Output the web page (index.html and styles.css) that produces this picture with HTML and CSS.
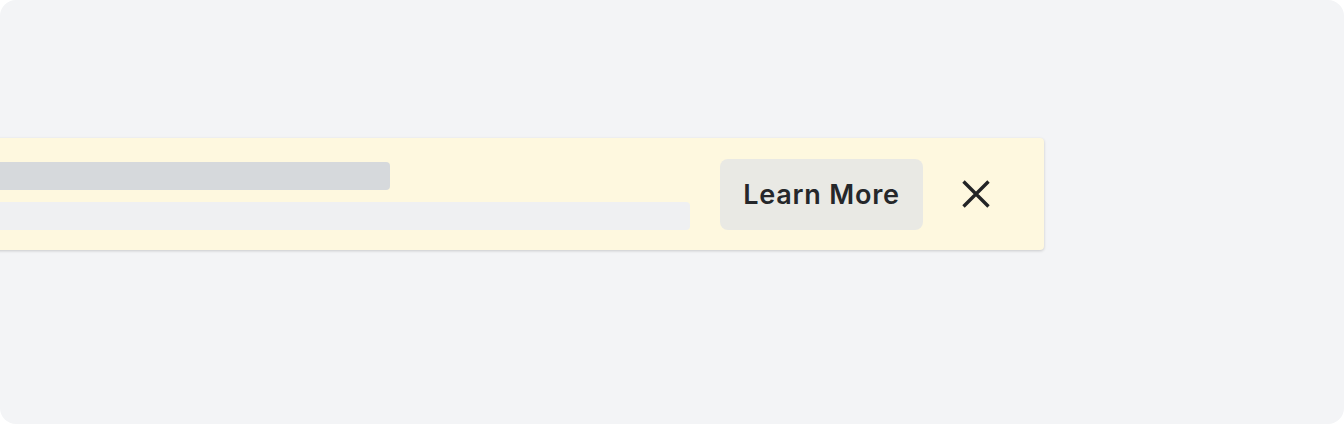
FILE: index.html
```html
<!DOCTYPE html>
<html lang="en">
<head>
<meta charset="utf-8">
<title>Banner</title>
<link rel="stylesheet" href="styles.css">
</head>
<body>
<div class="frame">
  <div class="banner">
    <div class="lines">
      <div class="line line-title"></div>
      <div class="line line-body"></div>
    </div>
    <button class="learn">Learn More</button>
    <button class="close" aria-label="Close">
      <svg width="28" height="28" viewBox="0 0 28 28" fill="none" stroke="#222426" stroke-width="3.4" stroke-linecap="butt">
        <path d="M1.5 1.5 L26.5 26.5 M26.5 1.5 L1.5 26.5"/>
      </svg>
    </button>
  </div>
</div>
</body>
</html>
```

FILE: styles.css
```css
html, body {
  margin: 0;
  padding: 0;
  background: #ffffff;
}
.frame {
  width: 1344px;
  height: 424px;
  box-sizing: border-box;
  background: #f3f4f6;
  border-radius: 16px;
  overflow: hidden;
  padding-top: 138px;
  font-family: Inter, "Liberation Sans", sans-serif;
}
.banner {
  margin-left: -60px;
  width: 1104px;
  height: 112px;
  box-sizing: border-box;
  background: #fef8df;
  border-radius: 4px;
  box-shadow: 0 1px 3px rgba(0, 0, 0, 0.18);
  display: flex;
  align-items: center;
  padding: 0 54px 0 40px;
}
.lines {
  width: 710px;
  display: flex;
  flex-direction: column;
  gap: 12px;
  padding-top: 4px;
}
.line {
  height: 28px;
  border-radius: 4px;
}
.line-title {
  width: 410px;
  background: #d6d9dc;
}
.line-body {
  width: 710px;
  background: #eff0f2;
}
.learn {
  margin-left: 30px;
  width: 203px;
  height: 71px;
  border: none;
  border-radius: 8px;
  background: #e9e9e4;
  color: #25272a;
  font-family: Inter, "Liberation Sans", sans-serif;
  font-size: 27px;
  font-weight: 600;
  letter-spacing: 0.8px;
  padding: 0;
  cursor: pointer;
}
.close {
  margin-left: 39px;
  width: 28px;
  height: 28px;
  padding: 0;
  border: none;
  background: none;
  display: flex;
  cursor: pointer;
}
```
